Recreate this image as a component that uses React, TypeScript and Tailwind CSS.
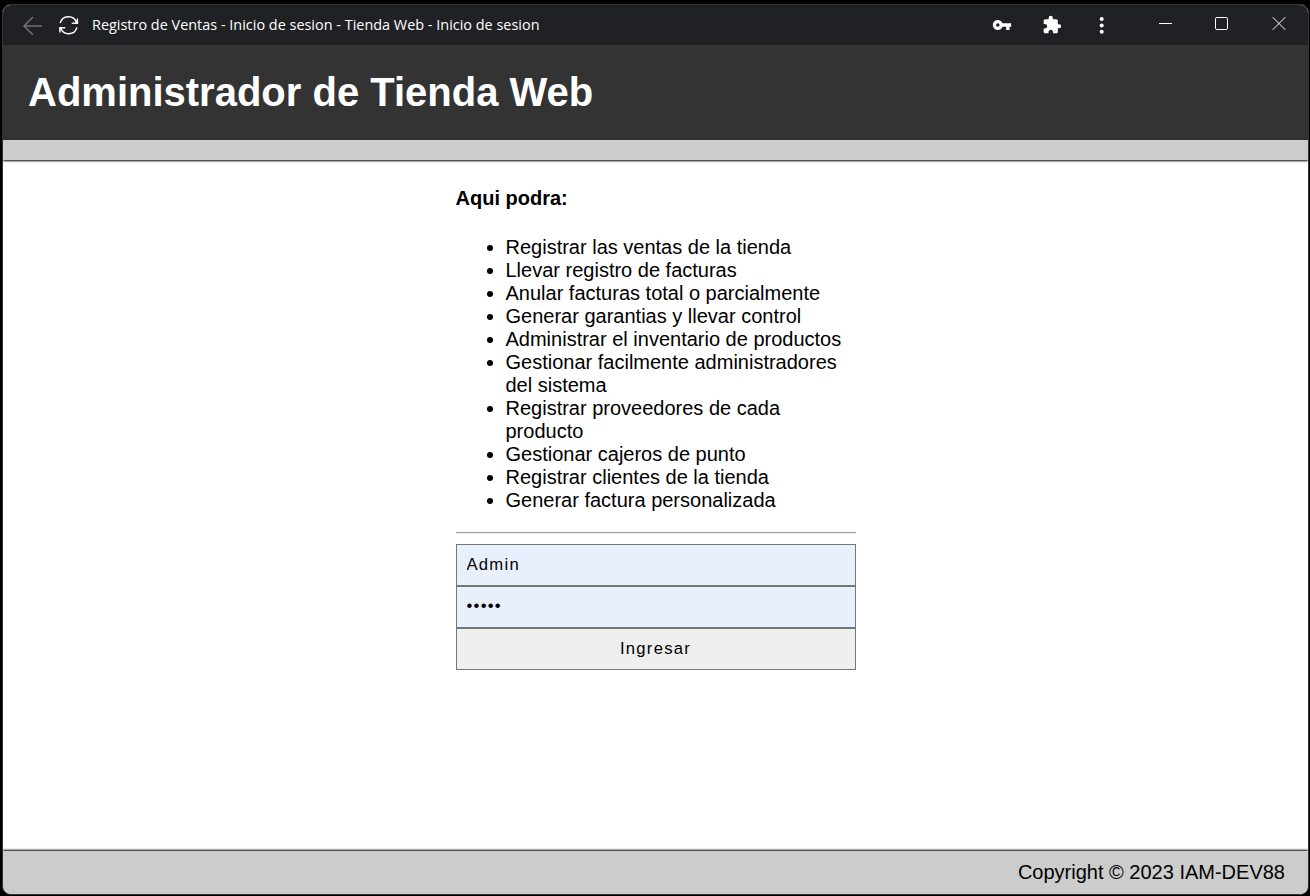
const features = [
  "Registrar las ventas de la tienda",
  "Llevar registro de facturas",
  "Anular facturas total o parcialmente",
  "Generar garantias y llevar control",
  "Administrar el inventario de productos",
  "Gestionar facilmente administradores del sistema",
  "Registrar proveedores de cada producto",
  "Gestionar cajeros de punto",
  "Registrar clientes de la tienda",
  "Generar factura personalizada",
];

function TitleBar() {
  return (
    <div className="flex h-10 shrink-0 items-center bg-[#202124] pl-5 text-white">
      <svg className="size-[20px] shrink-0" viewBox="0 0 20 20" fill="none" stroke="#717274" strokeWidth="1.5">
        <path d="M19 11H1M10 2L1 11L10 20" />
      </svg>
      <svg className="ml-4 size-[20px] shrink-0 overflow-visible" viewBox="0 0 20 20" fill="none" stroke="#fff" strokeWidth="1.5">
        <path d="M1.2 8.2A8.4 8.4 0 0 1 17.4 7.6M18.4 3.5V8.2H12.8M17.9 12.4A8.4 8.4 0 0 1 1.8 13M0.9 17.5V12.7H6.2" />
      </svg>
      <span className="ml-[13px] w-[447px] whitespace-nowrap font-['Open_Sans',sans-serif] text-[14.4px] leading-5 tracking-[0.02px]">
        Registro de Ventas - Inicio de sesion - Tienda Web - Inicio de sesion
      </span>
      <svg className="ml-[453px] size-5 shrink-0" viewBox="0 0 24 24" fill="#fff">
        <path d="M12.65 10C11.83 7.67 9.61 6 7 6c-3.31 0-6 2.69-6 6s2.69 6 6 6c2.61 0 4.83-1.67 5.65-4H17v4h4v-4h2v-4H12.65zM7 14c-1.1 0-2-.9-2-2s.9-2 2-2 2 .9 2 2-.9 2-2 2z" />
      </svg>
      <svg className="ml-[30px] size-5 shrink-0" viewBox="0 0 24 24" fill="#fff">
        <path d="M20.5 11H19V7c0-1.1-.9-2-2-2h-4V3.5a2.5 2.5 0 0 0-5 0V5H4c-1.1 0-1.99.9-1.99 2v3.8H3.5c1.49 0 2.7 1.21 2.7 2.7s-1.21 2.7-2.7 2.7H2V20c0 1.1.9 2 2 2h3.8v-1.5c0-1.49 1.21-2.7 2.7-2.7s2.7 1.21 2.7 2.7V22H17c1.1 0 2-.9 2-2v-4h1.5a2.5 2.5 0 0 0 0-5z" />
      </svg>
      <svg className="ml-[30px] size-5 shrink-0" viewBox="0 0 20 20" fill="#fff">
        <circle cx="9.7" cy="4" r="2" />
        <circle cx="9.7" cy="10.4" r="2" />
        <circle cx="9.7" cy="16.8" r="2" />
      </svg>
      <svg className="ml-[44px] size-5 shrink-0" viewBox="0 0 20 20" stroke="#fff">
        <path d="M3 8.5h13" />
      </svg>
      <svg className="ml-9 size-5 shrink-0" viewBox="0 0 20 20" fill="none" stroke="#fff">
        <rect x="3.5" y="2.5" width="12" height="12" rx="1.3" />
      </svg>
      <svg className="ml-[37px] size-5 shrink-0" viewBox="0 0 20 20" fill="none" stroke="#fff">
        <path d="M3.7 2.2L16.3 14.8M16.3 2.2L3.7 14.8" />
      </svg>
    </div>
  );
}

export default function App() {
  return (
    <div className="h-[896px] bg-black pt-1 pr-[1px] pb-[1px] pl-[2px] font-['Liberation_Sans',Arial,sans-serif]">
      <div className="flex h-full flex-col overflow-hidden rounded-[9px] border border-[#333] bg-white">
        <TitleBar />
        <header className="flex h-[95px] shrink-0 items-center bg-[#333] pb-[2px] pl-[25px]">
          <h1 className="text-[40px] leading-[46px] font-bold whitespace-nowrap text-white">
            Administrador de Tienda Web
          </h1>
        </header>
        <div className="z-10 h-5 shrink-0 bg-[#ccc] shadow-[0_1px_2px_#000]" />
        <main className="mx-auto w-[400px] flex-1 pt-[27px] text-[20px] leading-[23px] text-black">
          <h4 className="font-bold">Aqui podra:</h4>
          <ul className="mt-[26px] list-disc pl-[50px]">
            {features.map((f) => (
              <li key={f}>{f}</li>
            ))}
          </ul>
          <hr className="mt-5 h-[2px] border-t border-b border-t-[#9a9a9a] border-b-[#eee]" />
          <form className="mt-[10px] flex flex-col text-[16.667px] tracking-[1.25px]" onSubmit={(e) => e.preventDefault()}>
            <input
              aria-label="Usuario"
              defaultValue="Admin"
              className="h-[42px] border border-[#767676] bg-[#e8f0fe] px-[10px] pb-[1px] outline-none"
            />
            <input
              aria-label="Clave"
              type="password"
              defaultValue="Admin"
              className="h-[42px] border border-[#767676] bg-[#e8f0fe] px-[10px] pb-[2px] outline-none"
            />
            <button className="h-[42px] border border-[#767676] bg-[#efefef] pb-[1px]">Ingresar</button>
          </form>
        </main>
        <footer className="z-10 flex h-[43px] shrink-0 items-center justify-end bg-[#ccc] pr-[23px] pb-[2px] text-[20px] text-black shadow-[0_-1px_2px_#000]">
          Copyright © 2023 IAM-DEV88
        </footer>
      </div>
    </div>
  );
}
